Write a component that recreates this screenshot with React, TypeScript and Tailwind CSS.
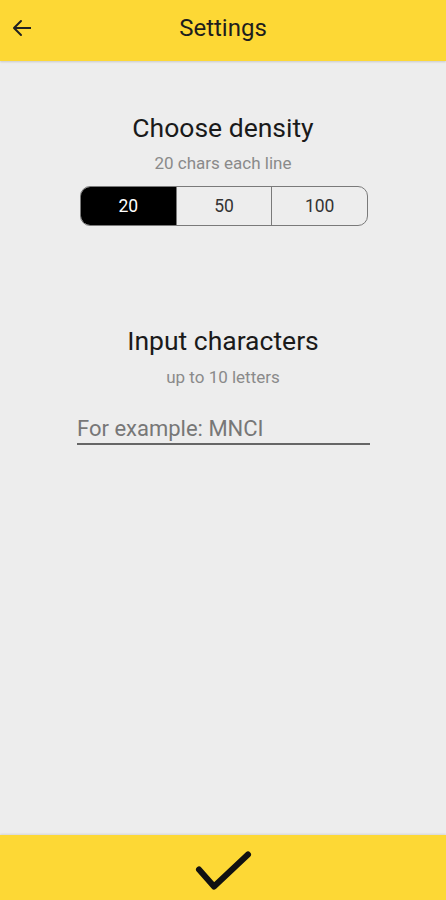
import { useState } from "react";

const options = ["20", "50", "100"];

export default function App() {
  const [density, setDensity] = useState("20");
  const [chars, setChars] = useState("");

  return (
    <div className="flex flex-col h-[900px] w-full bg-[#ededed] font-['Roboto',sans-serif]">
      <header className="relative flex items-center justify-center h-[61px] bg-[#fdd835] shadow-[0_1px_2px_rgba(0,0,0,0.15)]">
        <button className="absolute left-[10px] top-[16px] text-[#222]">
          <svg width="24" height="24" viewBox="0 0 24 24" fill="none" stroke="currentColor" strokeWidth="2" strokeLinecap="square">
            <path d="M20 12H5" />
            <path d="M11 5l-7 7 7 7" strokeLinecap="round" strokeLinejoin="round" />
          </svg>
        </button>
        <h1 className="text-[24px] leading-[30px] text-[#1d1d1d] mt-[-5px]">Settings</h1>
      </header>

      <main className="flex-1 flex flex-col items-center">
        <h2 className="mt-[51px] text-[26.5px] leading-[32px] text-[#1a1a1a]">Choose density</h2>
        <p className="mt-[8px] text-[17px] leading-[22px] text-[#8a8a8a]">{density} chars each line</p>
        <div className="mt-[12px] ml-[2px] flex w-[288px] h-[40px] rounded-[10px] border border-[#7a7a7a] overflow-hidden">
          {options.map((o, i) => (
            <button
              key={o}
              onClick={() => setDensity(o)}
              className={
                "flex-1 flex items-center justify-center text-[17.5px] " +
                (density === o ? "bg-black text-white" : "text-[#333]") +
                (i > 0 ? " border-l border-[#7a7a7a]" : "")
              }
            >
              {o}
            </button>
          ))}
        </div>

        <h2 className="mt-[99px] text-[26.5px] leading-[32px] text-[#1a1a1a]">Input characters</h2>
        <p className="mt-[9px] text-[17px] leading-[22px] text-[#8a8a8a]">up to 10 letters</p>
        <input
          value={chars}
          maxLength={10}
          onChange={e => setChars(e.target.value)}
          placeholder="For example: MNCI"
          className="mt-[19px] ml-[1px] w-[293px] h-[38px] pt-[6px] bg-transparent border-b-2 border-[#666] text-[22px] text-[#222] placeholder:text-[#777] outline-none"
        />
      </main>

      <footer className="relative h-[65px] bg-[#fdd835] shadow-[0_-1px_2px_rgba(0,0,0,0.1)]">
        <svg className="absolute left-[187px] top-[5px]" width="70" height="56" viewBox="0 0 70 56" fill="none" stroke="#111" strokeWidth="6" strokeLinecap="round" strokeLinejoin="round">
          <path d="M12 29.5L27 46.5L61 14.5" />
        </svg>
      </footer>
    </div>
  );
}
